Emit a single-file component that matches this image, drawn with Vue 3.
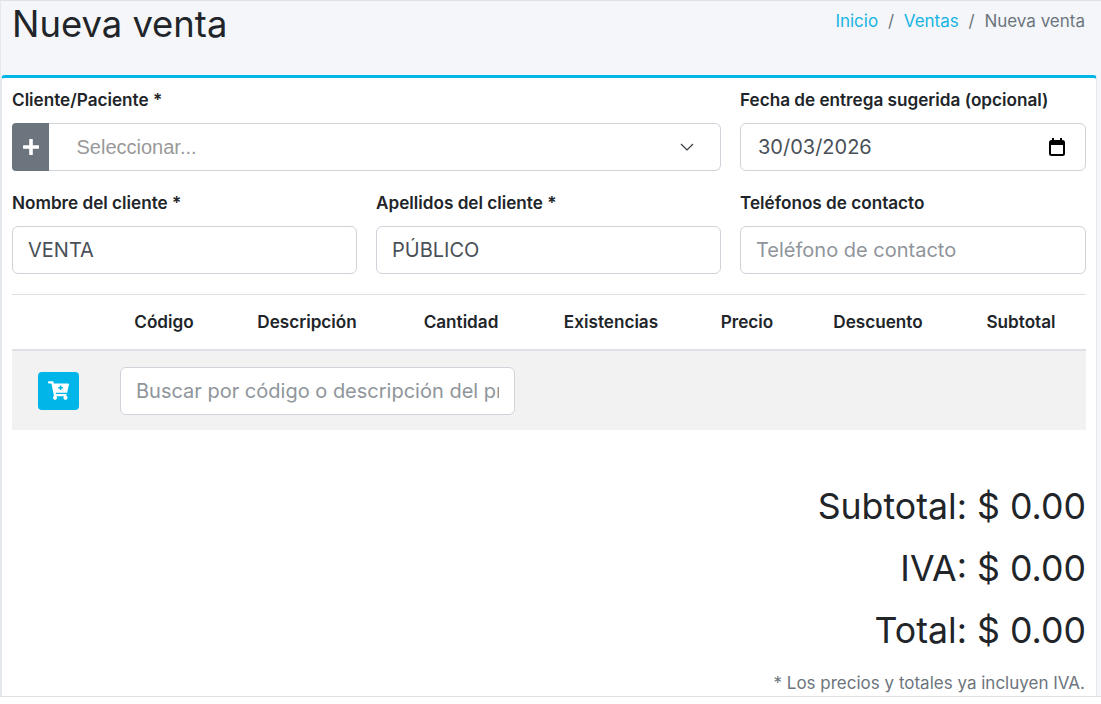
<script setup>
const columns = ['Código', 'Descripción', 'Cantidad', 'Existencias', 'Precio', 'Descuento', 'Subtotal']
const totals = ['Subtotal: $ 0.00', 'IVA: $ 0.00', 'Total: $ 0.00']
</script>

<template>
  <div class="page">
    <div class="main">
      <header class="head">
        <h1>Nueva venta</h1>
        <nav class="crumbs">
          <a>Inicio</a><span class="sep">/</span><a>Ventas</a><span class="sep">/</span><span class="now">Nueva venta</span>
        </nav>
      </header>
      <section class="card">
        <div class="row first">
          <div>
            <label>Cliente/Paciente *</label>
            <div class="select">
              <span class="plus">
                <svg width="16" height="16" viewBox="0 0 16 16"><path d="M8 1v14M1 8h14" stroke="#fff" stroke-width="3.6" stroke-linecap="round" /></svg>
              </span>
              <span class="placeholder">Seleccionar...</span>
              <svg class="chev" width="14" height="8" viewBox="0 0 14 8"><path d="M1 1l6 6 6-6" fill="none" stroke="#343a40" stroke-width="1.2" /></svg>
            </div>
          </div>
          <div>
            <label>Fecha de entrega sugerida (opcional)</label>
            <div class="field date">
              <span>30/03/2026</span>
              <svg width="16" height="18" viewBox="0 0 16 18">
                <path d="M4 0v3M12 0v3" stroke="#000" stroke-width="2" />
                <rect x="1" y="3" width="14" height="14" rx="1.5" fill="none" stroke="#000" stroke-width="2" />
                <rect x="1" y="3" width="14" height="4" fill="#000" />
              </svg>
            </div>
          </div>
        </div>
        <div class="row second">
          <div>
            <label>Nombre del cliente *</label>
            <input class="field" value="VENTA" readonly />
          </div>
          <div>
            <label>Apellidos del cliente *</label>
            <input class="field" value="PÚBLICO" readonly />
          </div>
          <div>
            <label>Teléfonos de contacto</label>
            <input class="field" placeholder="Teléfono de contacto" />
          </div>
        </div>
        <div class="table">
          <div class="thead">
            <span></span>
            <span v-for="c in columns" :key="c">{{ c }}</span>
          </div>
          <div class="tbody">
            <span class="cart">
              <svg width="21" height="19" viewBox="0 0 576 512">
                <path fill="#fff" d="M528.12 301.319l47.273-208C578.806 78.301 567.391 64 551.99 64H159.208l-9.166-44.81C147.758 8.021 137.93 0 126.529 0H24C10.745 0 0 10.745 0 24v16c0 13.255 10.745 24 24 24h69.883l70.248 343.435C147.325 417.1 136 435.222 136 456c0 30.928 25.072 56 56 56s56-25.072 56-56c0-15.674-6.447-29.835-16.824-40h209.647C430.447 426.165 424 440.326 424 456c0 30.928 25.072 56 56 56s56-25.072 56-56c0-22.172-12.888-41.332-31.579-50.405l5.517-24.276c3.413-15.018-8.002-29.319-23.403-29.319H218.117l-6.545-32h293.145c11.206 0 20.92-7.754 23.403-18.681z" />
                <path d="M344 118v124M282 180h124" stroke="#00b5e8" stroke-width="44" />
              </svg>
            </span>
            <input class="field search" placeholder="Buscar por código o descripción del producto" />
          </div>
        </div>
        <div class="totals">
          <div v-for="t in totals" :key="t" class="total">{{ t }}</div>
          <p class="note">* Los precios y totales ya incluyen IVA.</p>
        </div>
      </section>
    </div>
  </div>
</template>

<style>
html, body { margin: 0; background: #fff; }
</style>

<style scoped>
.page {
  height: 704px;
  font-family: Inter, "Liberation Sans", sans-serif;
  color: #212529;
  overflow: hidden;
}
.main {
  height: 697px;
  box-sizing: border-box;
  background: #f4f6f9;
  border-top: 1px solid #dee2e6;
  border-bottom: 1px solid #dee2e6;
  border-left: 1px solid #e4e7ec;
  overflow: hidden;
}
.head {
  height: 74px;
  box-sizing: border-box;
  padding: 0 16px 0 11px;
  display: flex;
  justify-content: space-between;
}
h1 {
  margin: 0;
  font-size: 36.4px;
  font-weight: 400;
  line-height: 46px;
}
.crumbs {
  font-size: 17px;
  line-height: 40px;
  color: #6c757d;
}
.crumbs a { color: #17b4e4; }
.sep { padding: 0 9.75px; }
.card {
  height: 630px;
  box-sizing: border-box;
  margin-right: 4px;
  padding: 12px 10px 0 10px;
  background: #fff;
  border-top: 3px solid #00b5e8;
  border-left: 1px solid #e4e7ec;
  border-right: 1px solid #e4e7ec;
  border-radius: 4px 4px 0 0;
}
.row {
  display: grid;
  gap: 19px;
}
.first { grid-template-columns: 709px 346px; }
.second { grid-template-columns: 345px 345px 346px; margin-top: 22px; }
label {
  display: block;
  font-size: 17.15px;
  font-weight: 600;
  line-height: 20px;
  margin-bottom: 13px;
}
.select {
  height: 48px;
  box-sizing: border-box;
  display: flex;
  align-items: center;
  border: 1px solid #ced4da;
  border-left: 0;
  border-radius: 6px;
}
.plus {
  width: 37px;
  height: 48px;
  flex: none;
  display: flex;
  align-items: center;
  justify-content: center;
  background: #6c757d;
  border-radius: 4px 0 0 4px;
}
.placeholder {
  flex: 1;
  padding-left: 27.5px;
  font-family: "Liberation Sans", sans-serif;
  font-size: 20px;
  color: #999;
}
.chev { margin-right: 26px; }
.field {
  display: flex;
  width: 100%;
  height: 48px;
  box-sizing: border-box;
  align-items: center;
  padding: 0 15px;
  border: 1px solid #ced4da;
  border-radius: 6px;
  font-family: inherit;
  font-size: 20px;
  color: #495057;
  background: #fff;
  outline: none;
}
.field::placeholder { color: #8f959b; opacity: 1; }
.date { justify-content: space-between; padding: 0 20px 0 17px; }
.table { margin-top: 20px; }
.thead, .tbody { display: grid; grid-template-columns: 96px 112px 174px 134px 166px 106px 156px 130px; }
.thead {
  height: 57px;
  box-sizing: border-box;
  align-items: center;
  padding-bottom: 1px;
  border-top: 1px solid #dee2e6;
  border-bottom: 2px solid #dee2e6;
  text-align: center;
  font-size: 17.15px;
  font-weight: 600;
}
.tbody {
  height: 79px;
  align-items: center;
  background: #f2f2f2;
}
.cart {
  width: 41px;
  height: 38px;
  margin-left: 26px;
  display: flex;
  align-items: center;
  justify-content: center;
  background: #00b5e8;
  border-radius: 4px;
}
.search {
  grid-column: 2 / 5;
  width: 395px;
  margin-left: 12px;
}
.totals { text-align: right; padding-top: 45px; }
.total {
  font-size: 35.7px;
  line-height: 62px;
}
.note {
  margin: 11px 0 0;
  padding-right: 1px;
  font-size: 17px;
  line-height: 22px;
  color: #6c757d;
}
</style>
